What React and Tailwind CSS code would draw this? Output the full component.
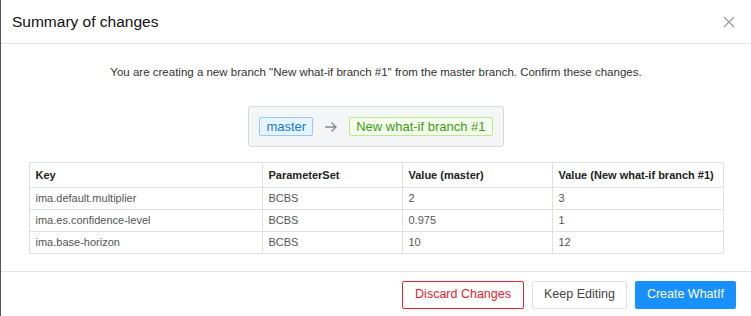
import React from 'react';

const rows = [
  { key: 'ima.default.multiplier', set: 'BCBS', master: '2', branch: '3' },
  { key: 'ima.es.confidence-level', set: 'BCBS', master: '0.975', branch: '1' },
  { key: 'ima.base-horizon', set: 'BCBS', master: '10', branch: '12' },
];

const App = () => {
  return (
    <div
      className="w-[751px] h-[316px] bg-white border-l border-[#555] flex flex-col overflow-hidden"
      style={{ fontFamily: '"Liberation Sans", Arial, sans-serif' }}
    >
      {/* Header */}
      <div className="h-[44px] flex items-center justify-between pl-[11px] pr-[16px] border-b border-[#e3e3e3]">
        <h2 className="text-[15.5px] font-medium text-[#111]">Summary of changes</h2>
        <svg width="12" height="12" viewBox="0 0 12 12" className="text-[#999]">
          <path d="M1 1 L11 11 M11 1 L1 11" stroke="currentColor" strokeWidth="1.2" fill="none" />
        </svg>
      </div>

      {/* Body */}
      <div className="flex-1 flex flex-col items-center pt-[20px] px-[28px]">
        <p className="text-[11.5px] text-[#333] leading-[16px]">
          You are creating a new branch "New what-if branch #1" from the master branch. Confirm these changes.
        </p>

        <div className="mt-[26px] h-[41px] px-[10px] flex items-center gap-[8px] bg-[#f4f5f7] border border-[#d9d9d9] rounded-[3px]">
          <span className="h-[19px] px-[6px] flex items-center text-[13px] text-[#1677d9] bg-[#e6f4ff] border border-[#91caff] rounded-[2px]">
            master
          </span>
          <svg width="14" height="12" viewBox="0 0 14 12" className="text-[#888] mx-[3px]">
            <path d="M1 6 H12 M7.5 1.5 L12 6 L7.5 10.5" stroke="currentColor" strokeWidth="1.3" fill="none" />
          </svg>
          <span className="h-[19px] px-[6px] flex items-center text-[13px] text-[#3a9c12] bg-[#f6ffed] border border-[#b7eb8f] rounded-[2px]">
            New what-if branch #1
          </span>
        </div>

        <table className="mt-[15px] w-[695px] border-collapse text-[11px]">
          <thead>
            <tr className="h-[25px]">
              <th className="w-[233px] border border-[#e0e0e0] px-[6px] text-left font-bold text-[#222]">Key</th>
              <th className="w-[140px] border border-[#e0e0e0] px-[6px] text-left font-bold text-[#222]">ParameterSet</th>
              <th className="w-[150px] border border-[#e0e0e0] px-[6px] text-left font-bold text-[#222]">Value (master)</th>
              <th className="border border-[#e0e0e0] px-[6px] text-left font-bold text-[#222]">Value (New what-if branch #1)</th>
            </tr>
          </thead>
          <tbody>
            {rows.map((r) => (
              <tr key={r.key} className="h-[22px] text-[#555]">
                <td className="border border-[#e0e0e0] px-[6px]">{r.key}</td>
                <td className="border border-[#e0e0e0] px-[6px]">{r.set}</td>
                <td className="border border-[#e0e0e0] px-[6px]">{r.master}</td>
                <td className="border border-[#e0e0e0] px-[6px]">{r.branch}</td>
              </tr>
            ))}
          </tbody>
        </table>
      </div>

      {/* Footer */}
      <div className="h-[45px] border-t border-[#e3e3e3] flex items-center justify-end gap-[8px] pr-[15px] pt-[1px]">
        <button className="h-[28px] px-[12px] text-[12.5px] text-[#e8232e] bg-white border border-[#e8232e] rounded-[2px]">
          Discard Changes
        </button>
        <button className="h-[28px] px-[11px] text-[12.5px] text-[#444] bg-white border border-[#e0e0e0] rounded-[2px]">
          Keep Editing
        </button>
        <button className="h-[28px] px-[12px] text-[12.5px] text-white bg-[#1890ff] rounded-[2px]">
          Create WhatIf
        </button>
      </div>
    </div>
  );
};

export default App;
